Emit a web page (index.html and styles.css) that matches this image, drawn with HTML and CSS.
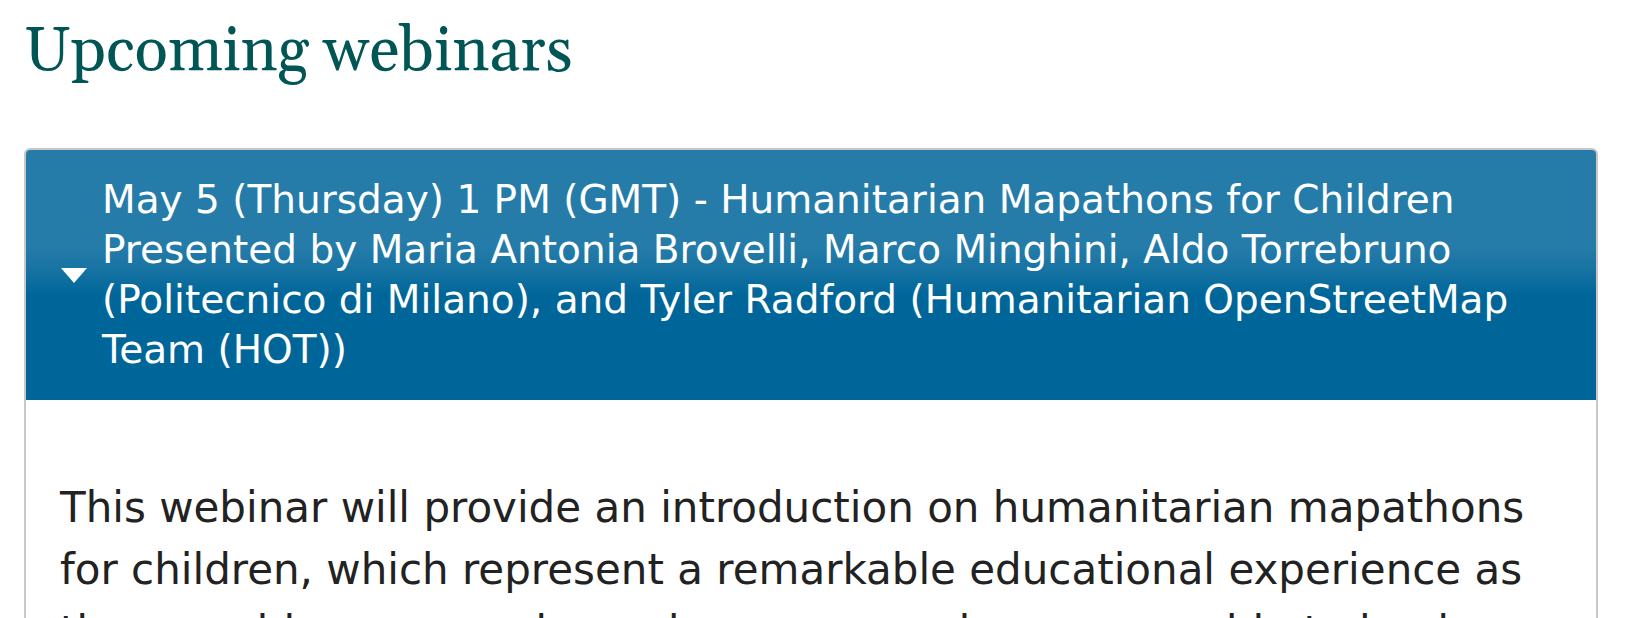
FILE: index.html
```html
<!DOCTYPE html>
<html lang="en">
<head>
<meta charset="utf-8">
<meta name="viewport" content="width=device-width, initial-scale=1">
<title>Upcoming webinars</title>
<link rel="stylesheet" href="styles.css">
</head>
<body>
<main class="page">
  <h1 class="page-title">Upcoming webinars</h1>
  <section class="accordion">
    <h2 class="accordion-heading">
      <button class="accordion-toggle" type="button" aria-expanded="true" aria-controls="webinar-details">
        <svg class="accordion-arrow" viewBox="0 0 26 16" aria-hidden="true"><path d="M0 1H26L13 16Z"/></svg>
        <span class="accordion-label">May 5 (Thursday) 1 PM (GMT) - Humanitarian Mapathons for Children Presented by Maria Antonia Brovelli, Marco Minghini, Aldo Torrebruno (Politecnico di Milano), and Tyler Radford (Humanitarian OpenStreetMap Team (HOT))</span>
      </button>
    </h2>
    <div class="accordion-panel" id="webinar-details">
      <p class="description">This webinar will provide an introduction on humanitarian mapathons for children, which represent a remarkable educational experience as they combine geography and peer groups keep users able to lead</p>
    </div>
  </section>
</main>
</body>
</html>
```

FILE: styles.css
```css
*,
*::before,
*::after {
  box-sizing: border-box;
}

html,
body {
  height: 100%;
}

body {
  margin: 0;
  overflow: hidden;
  background: #fff;
  color: #222;
  font-family: Verdana, "DejaVu Sans", sans-serif;
}

.page {
  padding: 14px 28px 0 24px;
}

.page-title {
  margin: 0 0 58px;
  color: #005555;
  font: 400 62px/76px Georgia, Gelasio, "Liberation Serif", serif;
}

.accordion {
  border: 2px solid #c8c8c8;
  border-radius: 6px;
  overflow: hidden;
}

.accordion-heading {
  margin: 0;
  font: inherit;
}

.accordion-toggle {
  display: flex;
  align-items: center;
  gap: 15px;
  width: 100%;
  margin: 0;
  padding: 25px 60px 25px 35px;
  border: 0;
  background: linear-gradient(#267ca9 0%, #267ca9 38%, #1a75a4 46%, #006699 58%);
  color: #fff;
  font: 400 39px/50px Verdana, "DejaVu Sans", sans-serif;
  text-align: left;
  cursor: pointer;
}

.accordion-arrow {
  flex: none;
  width: 26px;
  height: 16px;
  fill: #fff;
}

.accordion-label {
  flex: 1;
}

.accordion-panel {
  padding: 77px 50px 0 34px;
}

.description {
  margin: 0;
  font-size: 42px;
  line-height: 62px;
}
```
